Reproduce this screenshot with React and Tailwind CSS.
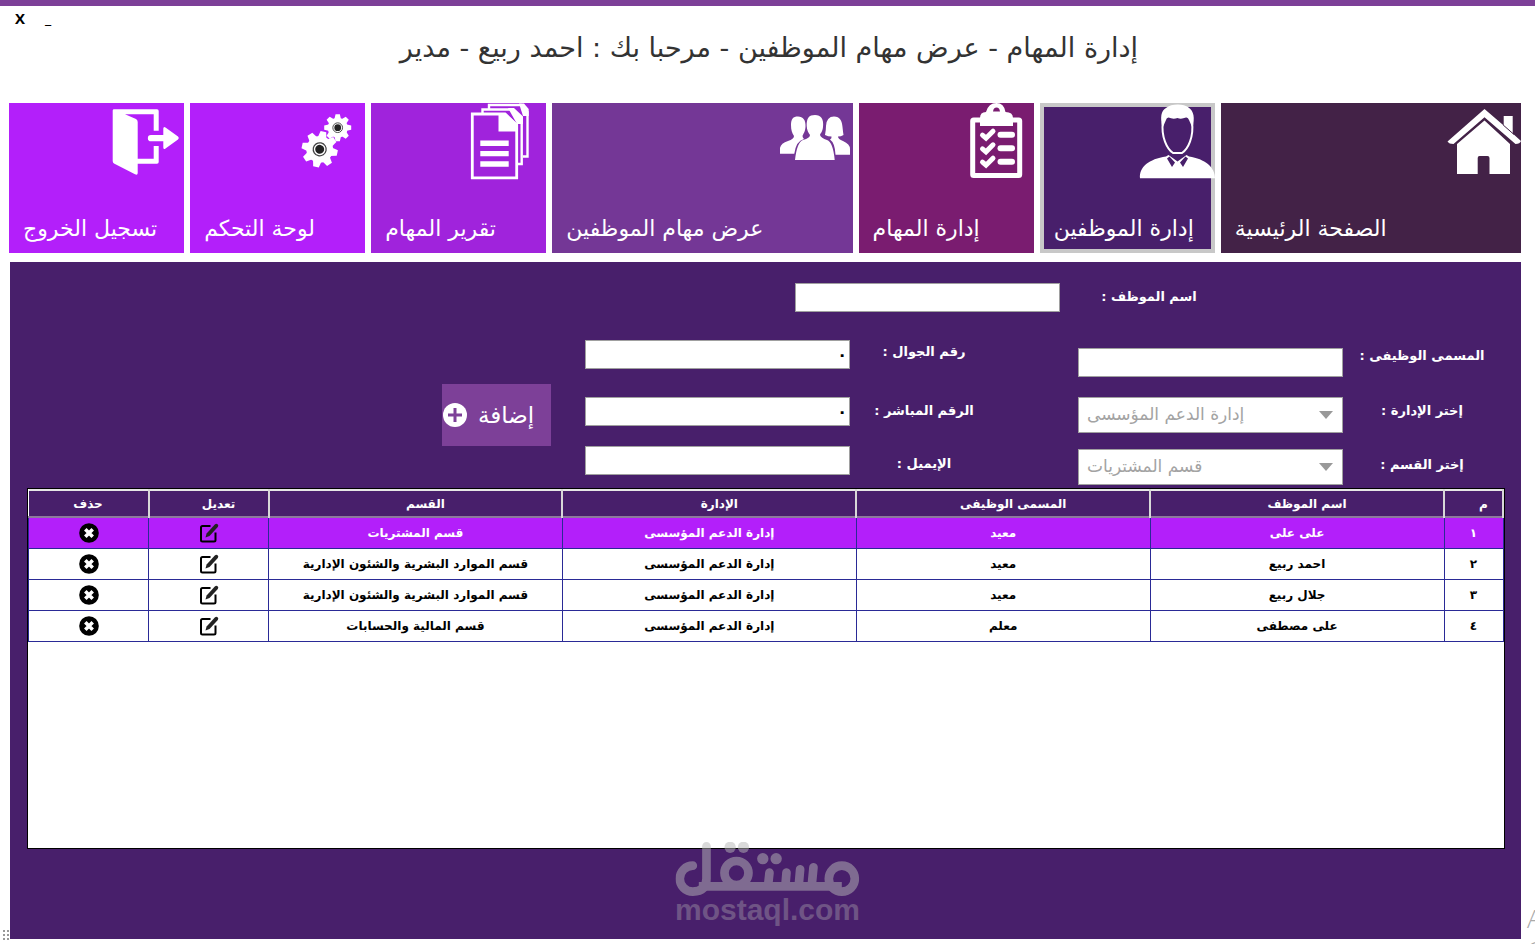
import clsx from 'clsx';

const HomeIcon = () => (
  <svg viewBox="0 0 80 80" className="h-20 w-20" fill="white">
    <path d="M43.5 6 L62.7 22.5 V13 H71.7 V30.5 L80 38 Q79 41 74.5 41 L43.5 14.3 L12.5 41 Q8 41 6.5 38.5 Z" />
    <path d="M43.5 17.5 L69 41 V71 H48.5 V55 Q48.5 53 46.5 53 H38.5 Q36.7 53 36.7 55 V71 H16 V41 Z" />
    <path d="M62.2 22 L73 31.5" stroke="#432247" strokeWidth="1" />
  </svg>
);

const EmployeeIcon = () => (
  <svg viewBox="0 0 80 80" className="h-20 w-20" fill="white">
    <path d="M27.5 25 C25 14 26 8 31 5 C36 0.5 49 0.5 53.5 4.5 C59 8 60 15 57.5 25 L54 17 Q53 14 51 14.5 Q46 16.5 42.5 15 Q38 16.5 33.5 14.5 Q31.5 14.5 31 17 Z" />
    <path
      d="M27.8 19 C26 34 32 46 38 50 H47 C53 46 59 34 57 19"
      fill="none"
      stroke="white"
      strokeWidth="2"
    />
    <path d="M5 75.3 C4 64 14 56 31 53.5 L33.5 52 L42.5 58.5 L51.5 52 L54 53.5 C70 56 80 64 80 75.3 Z" />
    <path d="M32 55.5 L34.5 53.5 L40 59.5 L37 64 Z M53 55.5 L50.5 53.5 L45 59.5 L48 64 Z" fill="#481f6b" />
  </svg>
);

const TasksIcon = () => (
  <svg viewBox="0 0 80 80" className="h-20 w-20" fill="none" stroke="white">
    <rect x="18.7" y="17" width="47" height="55.5" rx="1" strokeWidth="5" />
    <path
      d="M26 23 V15 Q26 9 32 9 Q34.5 0 42.5 0 Q50 0 51.5 9 Q59 9 59 15 V23 Z"
      fill="white"
      stroke="none"
    />
    <path d="M39 8.5 Q39.5 4.5 42.5 4.5 Q45.5 4.5 46 8.5 Z" fill="#7a1c70" stroke="none" />
    {[31.7, 45.3, 58.7].map((y) => (
      <g key={y} transform={`translate(0 ${y})`} strokeLinecap="round">
        <path d="M28.5 0.5 L32 3.5 L39 -3.5" strokeWidth="5" />
        <path d="M46.5 0 H58" strokeWidth="6" />
      </g>
    ))}
  </svg>
);

const PeopleIcon = () => (
  <svg viewBox="0 0 80 80" className="h-20 w-20" fill="white">
    <path d="M25 13.5 C30 13.5 33 17 32.5 24 C32 29 30.5 30.5 29.5 33 Q29.5 34.5 31 36 Q23 38 21.3 50.7 H7 V45 Q8 40 15 38 Q21 36 21 33 C19 30 18 27 18 22 C18 16 20 13.5 25 13.5 Z" />
    <path d="M42 12 C48 12 51 16 50 24 C49.5 29 47.5 30 47 32 Q48 35 54 37 Q60 39 61.7 57 H22 Q24 39 30 37 Q37 35 37 32 C35 29 34 27 33.7 23 C33.5 15 36 12 42 12 Z" />
    <path d="M61 13.5 C67 13.5 69 18 69.5 24 Q70 29 70.5 32 Q68 33.5 65 33.5 Q65 36 70 38 Q77 41 77 46 V51.7 H62.5 Q62 40 57 36.5 Q59 35.5 58.5 33.5 Q55 33.5 52 32 Q53 27 53 23 Q53.5 13.5 61 13.5 Z" />
  </svg>
);

const ReportIcon = () => (
  <svg viewBox="0 0 80 80" className="h-20 w-20" fill="none" stroke="white" strokeWidth="2.4">
    <path d="M23 6 V2 H55 L61.5 9 V53.5 H57" />
    <path d="M53 0.5 H58 L62.7 6 V13 H57 Z" fill="white" stroke="none" />
    <path d="M16.5 10 V6.5 H47 L55.7 15 V61 H52" />
    <path d="M42 5 H48 L57 13.5 V21 H51 Z" fill="white" stroke="none" />
    <path d="M6.3 11 H39 L50.7 22 V74.8 H6.3 Z" strokeWidth="2.8" />
    <path d="M32.5 10 H39.5 L52 21.5 V28.5 H32.5 Z" fill="white" stroke="none" />
    <path d="M14.3 40.3 H42.7 M14.3 50.6 H42.7 M14.3 61 H42.7" strokeWidth="5.4" />
  </svg>
);

const teeth = [0, 45, 90, 135, 180, 225, 270, 315];

const Gear = ({ x, y, size, turn }) => (
  <g transform={`translate(${x} ${y}) rotate(${turn}) scale(${size})`}>
    <circle r="0.74" fill="white" />
    {teeth.map((angle) => (
      <path
        key={angle}
        d="M-0.25 -0.6 L-0.16 -1 H0.16 L0.25 -0.6 Z"
        transform={`rotate(${angle})`}
        fill="white"
      />
    ))}
    <circle r="0.36" fill="white" stroke="#444" strokeWidth="0.07" />
    <circle r="0.25" fill="#222" />
  </g>
);

const SettingsIcon = () => (
  <svg viewBox="0 0 80 80" className="h-20 w-20">
    <Gear x={34.7} y={46.3} size={18} turn={12} />
    <Gear x={52.7} y={24.7} size={13.5} turn={0} />
  </svg>
);

const LogoutIcon = () => (
  <svg viewBox="0 0 80 80" className="h-20 w-20" fill="white">
    <path d="M8.7 7.5 Q8.7 6.3 10 6.3 H53 Q54.7 6.3 54.7 8 V27.7 H49.7 V11.3 H21 L32 16 Q33.7 17 33.7 19 V55.7 H49.7 V43 H54.7 V59 Q54.7 60.7 53 60.7 H33.7 V70 Q33.7 72.5 31 71.3 L10 60.5 Q8.7 59.7 8.7 58 Z" />
    <path d="M47 32 H59.3 V25.5 Q59.5 23 61.5 24.5 L74 33.5 Q75.7 35 74 36.5 L61.5 45.5 Q59.5 47 59.3 44.5 V38.3 H47 A3.1 3.1 0 0 1 47 32 Z" />
  </svg>
);

const tiles = [
  { label: 'الصفحة الرئيسية', color: 'bg-[#432247]', Icon: HomeIcon },
  { label: 'إدارة الموظفين', color: 'bg-[#481f6b]', Icon: EmployeeIcon, active: true },
  { label: 'إدارة المهام', color: 'bg-[#7a1c70]', Icon: TasksIcon },
  { label: 'عرض مهام الموظفين', color: 'bg-[#743796]', Icon: PeopleIcon },
  { label: 'تقرير المهام', color: 'bg-[#a023dc]', Icon: ReportIcon },
  { label: 'لوحة التحكم', color: 'bg-[#b31ffa]', Icon: SettingsIcon },
  { label: 'تسجيل الخروج', color: 'bg-[#b31ffa]', Icon: LogoutIcon },
];

const Tile = ({ label, color, Icon, active }) => (
  <button
    type="button"
    className={clsx(
      'flex h-[150px] flex-col justify-between pb-2 text-white',
      color,
      active && 'shadow-[inset_0_0_0_4px_#c8c8c8]'
    )}
  >
    <Icon />
    <span className="self-end pl-3.5 text-[22px] leading-8 whitespace-nowrap">{label}</span>
  </button>
);

const TextField = ({ id, label, value = '', labelWidth, leading, className }) => (
  <div className={clsx('flex items-start', className)}>
    <label htmlFor={id} className={clsx('text-center text-[13px] font-bold text-white', labelWidth, leading)}>
      {label}
    </label>
    <input
      id={id}
      type="text"
      defaultValue={value}
      className="h-[29px] w-[265px] border border-[#a0a0a0] bg-white px-0.5 text-base font-bold text-black"
    />
  </div>
);

const SelectField = ({ id, label, value, leading }) => (
  <div className="flex items-start">
    <label htmlFor={id} className={clsx('w-[158px] text-center text-[13px] font-bold text-white', leading)}>
      {label}
    </label>
    <div className="relative w-[265px]">
      <select
        id={id}
        disabled
        dir="ltr"
        className="h-9 w-full appearance-none border border-[#a0a0a0] bg-white px-2 text-[17px] text-[#a3a3a3] opacity-100"
      >
        <option>{value}</option>
      </select>
      <svg viewBox="0 0 14 8" className="pointer-events-none absolute top-3.5 right-2.5 h-2 w-3.5" fill="#999">
        <path d="M0 0 H14 L7 8 Z" />
      </svg>
    </div>
  </div>
);

const EditIcon = () => (
  <svg viewBox="0 0 20 20" className="h-5 w-5" fill="none" stroke="black">
    <path d="M11.5 3 H3.5 Q2 3 2 4.5 V17 Q2 18.5 3.5 18.5 H15 Q16.5 18.5 16.5 17 V9.5" strokeWidth="2" />
    <path d="M6.5 14.5 L7.6 10.5 L15.8 1.5 Q17.3 0.2 18.6 1.3 Q19.9 2.6 18.8 4 L10.5 13 Z" fill="#222" stroke="none" />
  </svg>
);

const DeleteIcon = () => (
  <svg viewBox="0 0 20 20" className="h-5 w-5">
    <circle cx="10" cy="10" r="9.8" fill="black" />
    <path d="M6.3 6.3 L13.7 13.7 M13.7 6.3 L6.3 13.7" stroke="white" strokeWidth="3.6" />
  </svg>
);

const columns = [
  { title: 'م', width: 'w-[59px]' },
  { title: 'اسم الموظف' },
  { title: 'المسمى الوظيفى' },
  { title: 'الإدارة' },
  { title: 'القسم' },
  { title: 'تعديل', width: 'w-[120px]' },
  { title: 'حذف', width: 'w-[120px]' },
];

const rows = [
  ['١', 'على على', 'معيد', 'إدارة الدعم المؤسسى', 'قسم المشتريات'],
  ['٢', 'احمد ربيع', 'معيد', 'إدارة الدعم المؤسسى', 'قسم الموارد البشرية والشئون الإدارية'],
  ['٣', 'جلال ربيع', 'معيد', 'إدارة الدعم المؤسسى', 'قسم الموارد البشرية والشئون الإدارية'],
  ['٤', 'على مصطفى', 'معلم', 'إدارة الدعم المؤسسى', 'قسم المالية والحسابات'],
];

const EmployeesTable = () => (
  <table className="w-full table-fixed border-collapse text-[12px] font-bold">
    <thead>
      <tr className="h-[27px] border-t-2 border-b-2 border-t-[#e6e6e6] border-b-[#8d7a9c] bg-[#481f6b] text-white">
        {columns.map((col, i) => (
          <th
            key={col.title}
            className={clsx(
              'border-r-2 border-[#d8d8d8] p-0 leading-5',
              col.width,
              i < columns.length - 1 && 'pr-0 pl-5'
            )}
          >
            {col.title}
          </th>
        ))}
      </tr>
    </thead>
    <tbody>
      {rows.map((row, i) => (
        <tr
          key={row[0]}
          className={clsx('h-[31px]', i === 0 ? 'bg-[#b31ffa] text-white' : 'bg-white text-black')}
        >
          {row.map((cell, j) => (
            <td key={j} className="border border-[#2a2a96] p-0 text-center leading-5 whitespace-nowrap">
              {cell}
            </td>
          ))}
          <td className="border border-[#2a2a96] p-0">
            <button type="button" aria-label="تعديل" className="mx-auto block">
              <EditIcon />
            </button>
          </td>
          <td className="border border-[#2a2a96] p-0">
            <button type="button" aria-label="حذف" className="mx-auto block">
              <DeleteIcon />
            </button>
          </td>
        </tr>
      ))}
    </tbody>
  </table>
);

const Watermark = () => (
  <div className="pointer-events-none absolute bottom-5 left-1/2 flex -translate-x-1/2 flex-col items-center">
    <svg
      viewBox="165 60 552 162"
      className="h-[54px] w-[184px] opacity-50"
      fill="none"
      stroke="#b7b7b7"
      strokeWidth="26"
      strokeLinecap="round"
    >
      <path d="M217 131 A39 39 0 1 0 217 209 Q258 207 258 170 V73" />
      <path d="M235 193 H664" strokeLinecap="butt" />
      <circle cx="348" cy="153" r="36" />
      <circle cx="664" cy="170" r="39" />
      <path d="M447 152 L443 188 M498 152 L495 188 M539 142 L535 188 M579 136 L574 188" />
      <g fill="#b7b7b7" stroke="none">
        <circle cx="329" cy="76" r="17" />
        <circle cx="369" cy="76" r="17" />
        <circle cx="427" cy="110" r="17" />
        <circle cx="467" cy="110" r="17" />
      </g>
    </svg>
    <span className="font-['Liberation_Sans',sans-serif] text-[30px] leading-7 font-bold text-[#b7b7b7] opacity-35">
      mostaql.com
    </span>
  </div>
);

const App = () => {
  return (
    <div
      dir="rtl"
      className="relative flex min-h-screen flex-col overflow-hidden border-t-[6px] border-[#7d4098] bg-white pr-3.5 pb-[5px] pl-[9px] font-['DejaVu_Sans',sans-serif]"
    >
      <header>
        <div dir="ltr" className="flex h-[26px] items-start gap-5 pl-1.5 font-['Open_Sans',sans-serif] text-[15px] leading-6 font-bold">
          <button type="button" aria-label="إغلاق">X</button>
          <button type="button" aria-label="تصغير">_</button>
        </div>
        <h1 className="pl-2 text-center text-[27px] leading-8 font-normal text-[#333]">
          إدارة المهام - عرض مهام الموظفين - مرحبا بك : احمد ربيع - مدير
        </h1>
      </header>

      <nav className="mt-[39px] grid grid-cols-[12fr_7fr_7fr_12fr_7fr_7fr_7fr] gap-1.5">
        {tiles.map((tile) => (
          <Tile key={tile.label} {...tile} />
        ))}
      </nav>

      <main className="mt-[9px] ml-px flex flex-1 flex-col bg-[#481f6b] pt-[21px]">
        <form>
          <TextField
            id="name"
            label="اسم الموظف :"
            labelWidth="w-[178px]"
            leading="leading-7"
            className="pr-[283px]"
          />
          <div className="mt-7 flex items-start pr-5">
            <div className="flex flex-col pt-2">
              <TextField id="job" label="المسمى الوظيفى :" labelWidth="w-[158px]" leading="leading-4" />
              <div className="mt-5 flex flex-col gap-4">
                <SelectField id="department" label="إختر الإدارة :" value="إدارة الدعم المؤسسى" leading="leading-7" />
                <SelectField id="section" label="إختر القسم :" value="قسم المشتريات" leading="leading-8" />
              </div>
            </div>
            <div className="mr-20 flex flex-col">
              <TextField id="mobile" label="رقم الجوال :" value="٠" labelWidth="w-[148px]" leading="leading-6" />
              <TextField
                id="direct"
                label="الرقم المباشر :"
                value="٠"
                labelWidth="w-[148px]"
                leading="leading-7"
                className="mt-7"
              />
              <TextField
                id="email"
                label="الإيميل :"
                labelWidth="w-[148px]"
                leading="leading-9"
                className="mt-5"
              />
            </div>
            <button
              type="button"
              className="mt-11 mr-[34px] flex h-[62px] w-[109px] items-center justify-end gap-2.5 bg-[#7d4098] text-[23px] text-white"
            >
              إضافة
              <svg viewBox="0 0 26 26" className="h-[26px] w-[26px]">
                <circle cx="13" cy="13" r="12" fill="white" />
                <path d="M13 6 V20 M6 13 H20" stroke="#7d4098" strokeWidth="3" />
              </svg>
            </button>
          </div>
        </form>

        <div className="mt-[3px] mr-4 mb-[90px] ml-[17px] flex-1 border border-black bg-white">
          <EmployeesTable />
        </div>
      </main>

      <Watermark />
      <div className="absolute bottom-1 left-[3px] grid grid-cols-2 gap-0.5" aria-hidden="true">
        {[0, 1, 2, 3, 4, 5].map((n) => (
          <span key={n} className="h-0.5 w-0.5 bg-[#999]" />
        ))}
      </div>
      <div
        dir="ltr"
        className="absolute -bottom-[22px] left-full -ml-2 font-['Open_Sans',sans-serif] leading-8 font-light text-[#aaa]"
      >
        <div className="text-[26px] leading-8">A</div>
        <div className="text-2xl leading-8">G</div>
      </div>
    </div>
  );
};

export default App;
